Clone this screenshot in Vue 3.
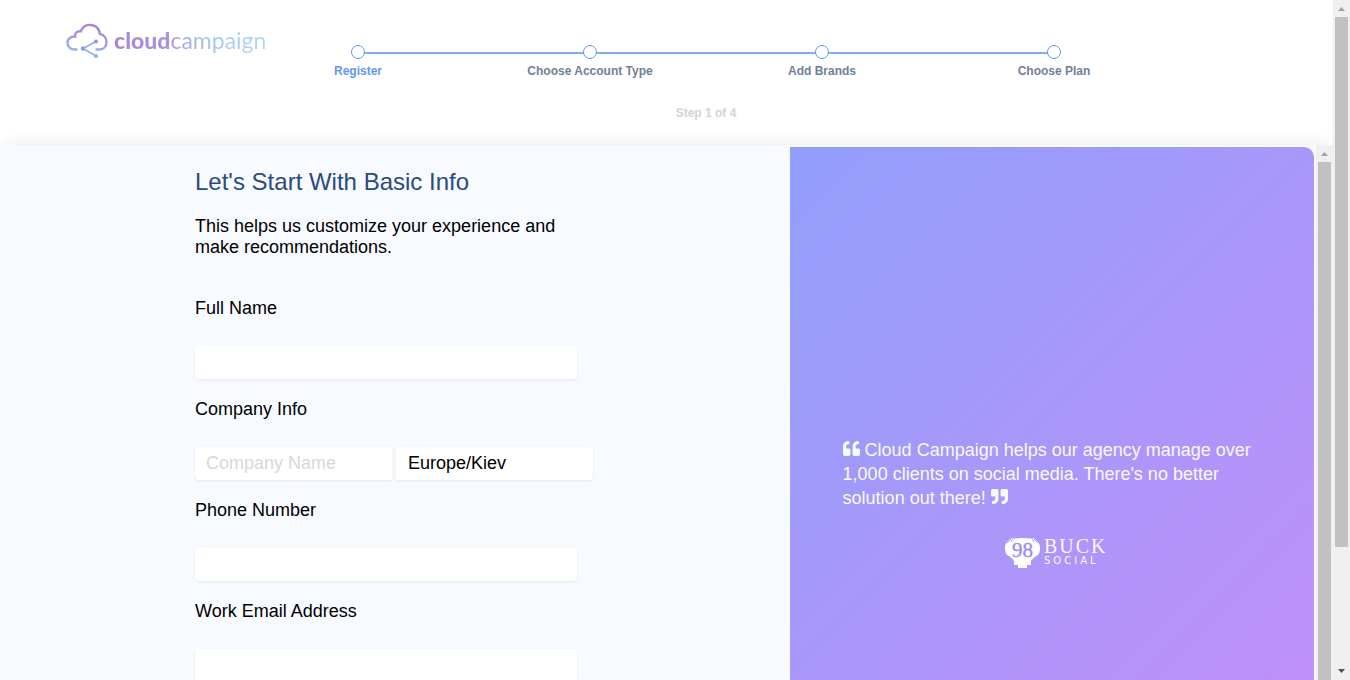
<script setup>
import { ref } from 'vue'

const steps = ['Register', 'Choose Account Type', 'Add Brands', 'Choose Plan']
const current = ref(0)
const fullName = ref('')
const company = ref('')
const timezone = ref('Europe/Kiev')
const phone = ref('')
const email = ref('')
</script>

<template>
  <div class="window">
    <div class="page">
      <header class="header">
        <a class="brand" href="#" aria-label="Cloud Campaign">
          <svg class="brand-mark" viewBox="0 0 42 36" fill="none">
            <defs>
              <linearGradient id="cloudFade" gradientUnits="userSpaceOnUse" x1="24" y1="2" x2="18" y2="34">
                <stop offset="0" stop-color="#aa80d4" />
                <stop offset="0.55" stop-color="#a49de2" />
                <stop offset="1" stop-color="#8fc3f2" />
              </linearGradient>
            </defs>
            <path d="M11.500 26.500H8.500C4.500 26.500 1.500 23.600 1.500 19.800C1.500 15.800 5 13 9.200 13.500C8.700 10.300 11.200 7.600 14.800 8.300C16.500 4 20.500 1.500 25.200 2C29.800 2.500 33.200 5.800 33.800 10.800C37.800 11.800 40.700 15.300 40.500 19.500C40.300 23.600 37.200 26.500 33 26.500H29.500" stroke="url(#cloudFade)" stroke-width="2.400" />
            <path d="M30 18.500L17 25.500L30 33" stroke="#8eacea" stroke-width="1.600" />
            <circle cx="30" cy="18.500" r="2" fill="#8f98e2" />
            <circle cx="17" cy="25.500" r="2.200" fill="#8c9fe6" />
            <circle cx="30" cy="33" r="2" fill="#82b7f0" />
          </svg>
          <span class="brand-name"><b>cloud</b>campaign</span>
        </a>
        <nav class="progress" aria-label="Registration progress">
          <ol class="steps">
            <li v-for="(step, i) in steps" :key="step" class="step" :class="{ active: i === current }">
              <span class="dot"></span>
              <span>{{ step }}</span>
            </li>
          </ol>
          <p class="count">Step {{ current + 1 }} of {{ steps.length }}</p>
        </nav>
      </header>

      <main class="main">
        <div class="content">
          <form class="form" @submit.prevent>
            <h1>Let's Start With Basic Info</h1>
            <p class="intro">This helps us customize your experience and make recommendations.</p>

            <div class="field">
              <label for="full-name">Full Name</label>
              <input id="full-name" v-model="fullName" type="text" />
            </div>
            <div class="field">
              <label for="company">Company Info</label>
              <div class="pair">
                <input id="company" v-model="company" type="text" placeholder="Company Name" />
                <select v-model="timezone" aria-label="Time zone">
                  <option>Europe/Kiev</option>
                </select>
              </div>
            </div>
            <div class="field">
              <label for="phone">Phone Number</label>
              <input id="phone" v-model="phone" type="tel" />
            </div>
            <div class="field">
              <label for="email">Work Email Address</label>
              <input id="email" v-model="email" type="email" />
            </div>
          </form>

          <aside class="promo">
            <blockquote>
              <svg class="quote" viewBox="0 0 512 512"><path d="M464 256h-80v-64c0-35.3 28.7-64 64-64h8c13.300 0 24-10.700 24-24V56c0-13.300-10.700-24-24-24h-8c-88.400 0-160 71.600-160 160v240c0 26.500 21.500 48 48 48h128c26.500 0 48-21.500 48-48V304c0-26.500-21.500-48-48-48zm-288 0H96v-64c0-35.300 28.700-64 64-64h8c13.300 0 24-10.700 24-24V56c0-13.300-10.700-24-24-24h-8C71.600 32 0 103.600 0 192v240c0 26.500 21.500 48 48 48h128c26.500 0 48-21.500 48-48V304c0-26.500-21.500-48-48-48z" /></svg>
              Cloud Campaign helps our agency manage over 1,000 clients on social media. There's no better solution out there!
              <svg class="quote" viewBox="0 0 512 512"><path d="M464 32H336c-26.500 0-48 21.500-48 48v128c0 26.500 21.500 48 48 48h80v64c0 35.300-28.700 64-64 64h-8c-13.300 0-24 10.700-24 24v48c0 13.300 10.700 24 24 24h8c88.400 0 160-71.600 160-160V80c0-26.500-21.500-48-48-48zm-288 0H48C21.500 32 0 53.500 0 80v128c0 26.500 21.500 48 48 48h80v64c0 35.300-28.700 64-64 64h-8c-13.300 0-24 10.700-24 24v48c0 13.300 10.700 24 24 24h8c88.400 0 160-71.600 160-160V80c0-26.500-21.500-48-48-48z" /></svg>
            </blockquote>
            <div class="client">
              <svg class="client-mark" viewBox="0 0 37 34">
                <path d="M8 2C12 3 14 2 18.500 2S25 3 29 2C33 4 36 7 36 12C36 16 35 19 32 20C30 22 28 23 27 25V29H23V32H14V29H10V25C9 23 7 22 5 20C2 19 1 16 1 12C1 7 4 4 8 2Z" fill="#fff" />
                <path d="M3 7L7 3M7 6L10 1M34 7L30 3M30 6L27 1" stroke="#a79bf8" stroke-width="1" />
                <text x="18.500" y="21" text-anchor="middle" font-family="Liberation Serif, serif" font-size="21" fill="#9c8ff4" stroke="#9c8ff4" stroke-width="0.400">98</text>
              </svg>
              <div class="client-name">
                <span class="buck">BUCK</span>
                <span class="social">SOCIAL</span>
              </div>
            </div>
          </aside>
        </div>
        <div class="scrollbar" aria-hidden="true">
          <svg class="arrow" viewBox="0 0 17 17"><path d="M5 11L8.500 7L12 11Z" fill="#a3a3a3" /></svg>
          <div class="thumb full"></div>
        </div>
      </main>
    </div>
    <div class="scrollbar" aria-hidden="true">
      <svg class="arrow" viewBox="0 0 17 17"><path d="M5 11L8.500 7L12 11Z" fill="#a3a3a3" /></svg>
      <div class="track"><div class="thumb"></div></div>
      <svg class="arrow" viewBox="0 0 17 17"><path d="M5 6H12L8.500 10Z" fill="#505050" /></svg>
    </div>
  </div>
</template>

<style>
body {
  margin: 0;
  overflow: hidden;
}
</style>

<style scoped>
* {
  box-sizing: border-box;
}
.window {
  display: flex;
  height: 100vh;
  font-family: 'Liberation Sans', Arial, sans-serif;
  font-size: 18px;
  color: #000;
  background: #fff;
}
.page {
  flex: 1;
  min-width: 0;
  display: flex;
  flex-direction: column;
}
.header {
  display: grid;
  grid-template-columns: 242px 1fr 163px;
  height: 145px;
  flex: none;
}
.brand {
  display: flex;
  align-items: flex-start;
  padding: 23px 0 0 66px;
  text-decoration: none;
  white-space: nowrap;
}
.brand-mark {
  width: 42px;
  height: 36px;
  flex: none;
}
.brand-name {
  margin-left: 6px;
  font: 400 23px/34px Lato, sans-serif;
  color: transparent;
  background: linear-gradient(90deg, #aa83d6, #a795df 35%, #a9c2ee 60%, #aedbf5);
  background-clip: text;
}
.brand-name b {
  font-weight: 900;
}
.steps {
  display: flex;
  margin: 0;
  padding: 45px 0 0;
  list-style: none;
}
.step {
  flex: 1;
  position: relative;
  display: flex;
  flex-direction: column;
  align-items: center;
  gap: 4px;
  font-size: 12px;
  line-height: 16px;
  font-weight: bold;
  color: #718096;
}
.step.active {
  color: #6496f0;
}
.step + .step::before {
  content: '';
  position: absolute;
  top: 7px;
  right: 50%;
  width: 100%;
  height: 2px;
  background: #84a9ec;
}
.dot {
  position: relative;
  z-index: 1;
  width: 14px;
  height: 14px;
  border: 1px solid #6496f0;
  border-radius: 50%;
  background: #fff;
}
.count {
  margin: 26px 0 0;
  text-align: center;
  font-size: 12px;
  line-height: 16px;
  font-weight: bold;
  color: #d3d3d3;
}
.main {
  flex: 1;
  min-height: 0;
  display: flex;
  background: #f7faff;
  box-shadow: 0 -4px 16px -4px rgba(0, 0, 0, 0.09);
}
.content {
  flex: 1;
  min-width: 0;
  display: grid;
  grid-template-columns: 60fr 40fr;
  padding-top: 2px;
  overflow: hidden;
}
.form {
  padding: 21px 0 0 195px;
}
h1 {
  margin: 0;
  font-size: 24px;
  line-height: 28px;
  font-weight: normal;
  color: #2c4a7c;
}
.intro {
  width: 382px;
  margin: 20px 0 40px;
  line-height: 21px;
}
.field {
  display: flex;
  flex-direction: column;
  align-items: flex-start;
  gap: 27px;
  margin-bottom: 20px;
}
.field label {
  line-height: 21px;
}
.field input,
.field select {
  width: 382px;
  height: 33px;
  padding: 0 11px;
  border: 0;
  border-radius: 4px;
  background: #fff;
  box-shadow: 0 1px 3px rgba(0, 0, 0, 0.08);
  font: inherit;
  color: #000;
  appearance: none;
}
.field input::placeholder {
  color: #d8d8d8;
  opacity: 1;
}
.pair {
  display: flex;
  gap: 4px;
}
.pair input,
.pair select {
  width: 197px;
}
.pair input {
  border-radius: 4px 0 0 4px;
}
.pair select {
  padding: 0 12px 2px;
  border-radius: 0 4px 4px 0;
}
.promo {
  margin-right: 2px;
  padding: 291px 45px 0 53px;
  border-radius: 0 10px 0 0;
  background: linear-gradient(135deg, #919ffa, #c08ff9);
  color: #f7faff;
}
blockquote {
  margin: 0;
  line-height: 24px;
}
.quote {
  width: 17px;
  height: 17px;
  vertical-align: -1px;
  fill: currentColor;
}
.client {
  display: flex;
  justify-content: center;
  gap: 3px;
  margin-top: 26px;
}
.client-mark {
  width: 37px;
  height: 34px;
}
.client-name {
  display: flex;
  flex-direction: column;
}
.buck {
  font: 20px/20px 'Liberation Serif', serif;
  letter-spacing: 2px;
}
.social {
  font: 10px/10px 'DejaVu Sans', sans-serif;
  letter-spacing: 3px;
}
.scrollbar {
  width: 17px;
  flex: none;
  display: flex;
  flex-direction: column;
  align-items: center;
  background: #f0f0f0;
}
.arrow {
  width: 17px;
  height: 17px;
  flex: none;
}
.track {
  flex: 1;
  width: 13px;
}
.thumb {
  width: 13px;
  height: 82%;
  background: #c1c1c1;
}
.thumb.full {
  height: auto;
  flex: 1;
}
</style>
